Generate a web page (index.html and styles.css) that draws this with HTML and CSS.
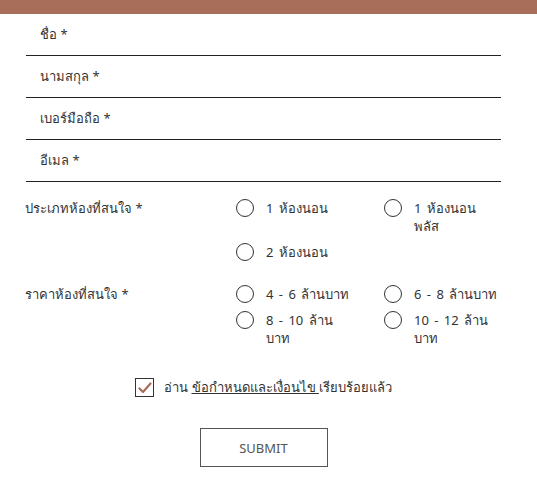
FILE: index.html
```html
<!DOCTYPE html>
<html lang="th">
<head>
  <meta charset="UTF-8">
  <meta name="viewport" content="width=device-width, initial-scale=1.0">
  <title>ลงทะเบียน</title>
  <link rel="stylesheet" href="styles.css">
</head>
<body>
  <div class="top-bar"></div>
  <form class="register-form" id="registerForm">
    <div class="field"><span class="field-label">ชื่อ *</span></div>
    <div class="field"><span class="field-label">นามสกุล *</span></div>
    <div class="field"><span class="field-label">เบอร์มือถือ *</span></div>
    <div class="field"><span class="field-label">อีเมล *</span></div>

    <div class="choice-group">
      <div class="choice-label">ประเภทห้องที่สนใจ *</div>
      <div class="options">
        <label class="option"><span class="radio"></span><span class="option-text">1 ห้องนอน</span></label>
        <label class="option"><span class="radio"></span><span class="option-text">1 ห้องนอน พลัส</span></label>
        <label class="option"><span class="radio"></span><span class="option-text">2 ห้องนอน</span></label>
      </div>
    </div>

    <div class="choice-group">
      <div class="choice-label">ราคาห้องที่สนใจ *</div>
      <div class="options">
        <label class="option"><span class="radio"></span><span class="option-text">4 - 6 ล้านบาท</span></label>
        <label class="option"><span class="radio"></span><span class="option-text">6 - 8 ล้านบาท</span></label>
        <label class="option"><span class="radio"></span><span class="option-text">8 - 10 ล้าน บาท</span></label>
        <label class="option"><span class="radio"></span><span class="option-text">10 - 12 ล้าน บาท</span></label>
      </div>
    </div>

    <div class="agree">
      <span class="checkbox">
        <svg width="14" height="12" viewBox="0 0 14 12"><path d="M1.5 6.5 L5 10 L12.5 1.5" fill="none" stroke="#a86e5a" stroke-width="2.2" stroke-linecap="round" stroke-linejoin="round"/></svg>
      </span>
      <span>อ่าน <a href="#" class="terms">ข้อกำหนดและเงื่อนไข </a>เรียบร้อยแล้ว</span>
    </div>

    <div class="actions">
      <button type="submit" class="submit-btn">SUBMIT</button>
    </div>
  </form>
</body>
</html>
```

FILE: styles.css
```css
body {
  margin: 0;
  font-family: "Noto Sans", "Liberation Sans", sans-serif;
  font-size: 13px;
  color: #333;
  background: white;
}
.top-bar {
  height: 14px;
  background-color: #a86e5a;
}
.register-form {
  width: 475px;
  margin-left: 26px;
}
.field {
  height: 41px;
  display: flex;
  align-items: center;
  padding-left: 14px;
  border-bottom: 1px solid #222;
}
.choice-group {
  display: grid;
  grid-template-columns: 210px 1fr;
  margin-top: 17px;
  line-height: 18px;
}
.choice-group + .choice-group {
  margin-top: 24px;
}
.choice-label {
  margin-left: -1px;
}
.options {
  display: grid;
  grid-template-columns: 148px 148px;
  row-gap: 8px;
}
.option {
  display: flex;
  align-items: flex-start;
  gap: 12px;
}
.radio {
  flex-shrink: 0;
  width: 16px;
  height: 16px;
  border: 1.5px solid #333;
  border-radius: 50%;
}
.option-text {
  max-width: 86px;
  word-spacing: 2px;
}
.agree {
  display: flex;
  justify-content: center;
  align-items: center;
  gap: 10px;
  margin-top: 30px;
}
.checkbox {
  width: 17px;
  height: 17px;
  border: 1px solid #333;
  display: flex;
  align-items: center;
  justify-content: center;
}
.terms {
  color: #333;
  text-decoration: underline;
}
.actions {
  display: flex;
  justify-content: center;
  margin-top: 30px;
}
.submit-btn {
  width: 128px;
  height: 39px;
  background: white;
  border: 1px solid #555;
  color: #555;
  font-family: "Noto Sans", "Liberation Sans", sans-serif;
  font-size: 13px;
  cursor: pointer;
}
```
